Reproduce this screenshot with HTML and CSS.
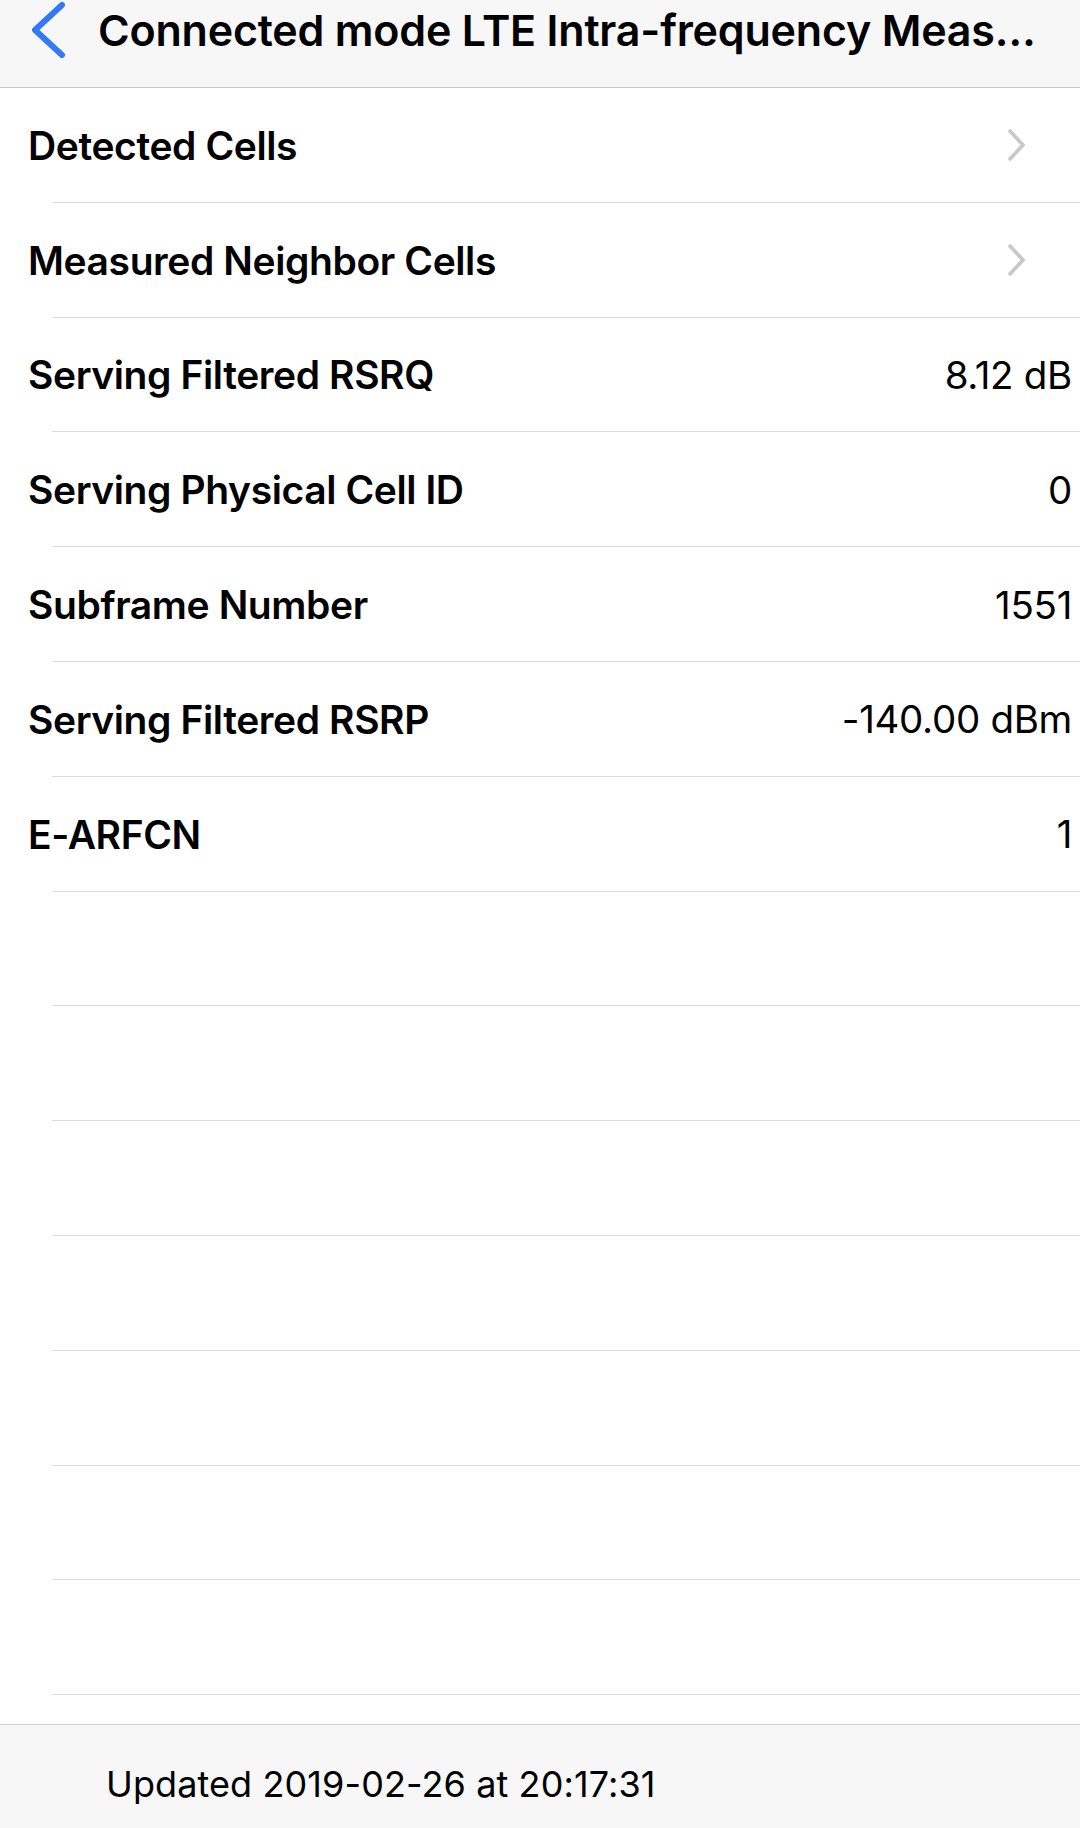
FILE: index.html
```html
<!DOCTYPE html>
<html>
<head>
<meta charset="utf-8">
<link rel="stylesheet" href="styles.css">
</head>
<body>
<div class="screen">
  <header class="navbar">
    <div class="nav-row">
      <svg class="back" width="40" height="60" viewBox="0 0 40 60"><polyline points="30,5 3,30 30,55" fill="none" stroke="#3478f6" stroke-width="6" stroke-linecap="round" stroke-linejoin="round"/></svg>
      <div class="title">Connected mode LTE Intra-frequency Meas…</div>
    </div>
  </header>
  <main class="list">
    <div class="row nav"><span class="label">Detected Cells</span><svg class="chev" width="22" height="36" viewBox="0 0 22 36"><polyline points="3,3 17,18 3,33" fill="none" stroke="#c7c7cc" stroke-width="3.6"/></svg></div>
    <div class="row nav"><span class="label">Measured Neighbor Cells</span><svg class="chev" width="22" height="36" viewBox="0 0 22 36"><polyline points="3,3 17,18 3,33" fill="none" stroke="#c7c7cc" stroke-width="3.6"/></svg></div>
    <div class="row"><span class="label">Serving Filtered RSRQ</span><span class="value">8.12 dB</span></div>
    <div class="row"><span class="label">Serving Physical Cell ID</span><span class="value">0</span></div>
    <div class="row"><span class="label">Subframe Number</span><span class="value">1551</span></div>
    <div class="row"><span class="label">Serving Filtered RSRP</span><span class="value">-140.00 dBm</span></div>
    <div class="row"><span class="label">E-ARFCN</span><span class="value">1</span></div>
    <div class="row"></div>
    <div class="row"></div>
    <div class="row"></div>
    <div class="row"></div>
    <div class="row"></div>
    <div class="row"></div>
    <div class="row"></div>
  </main>
  <footer class="footer">
    <span class="updated">Updated 2019-02-26 at 20:17:31</span>
  </footer>
</div>
</body>
</html>
```

FILE: styles.css
```css
html, body {
  margin: 0;
  padding: 0;
  background: #ffffff;
}

.screen {
  width: 1080px;
  height: 1828px;
  display: flex;
  flex-direction: column;
  overflow: hidden;
  font-family: Inter, "Noto Sans", sans-serif;
  color: #000;
}

.navbar {
  height: 87px;
  flex: none;
  background: #f7f7f8;
  border-bottom: 1px solid #c9c9cc;
}

.nav-row {
  height: 60px;
  display: flex;
  align-items: center;
}

.back {
  margin-left: 32px;
  flex: none;
}

.title {
  margin-left: 26px;
  font-size: 43px;
  font-weight: 600;
  letter-spacing: -0.2px;
  white-space: nowrap;
}

.list {
  flex: 1;
  display: flex;
  flex-direction: column;
}

.row {
  height: 114.8px;
  flex: none;
  box-sizing: border-box;
  display: flex;
  align-items: center;
  justify-content: space-between;
  padding: 0 8px 0 28px;
  background: linear-gradient(#dcdce0, #dcdce0) no-repeat 52px 100% / calc(100% - 52px) 1px;
}

.row.nav {
  padding-right: 52px;
}

.label {
  font-size: 39px;
  font-weight: 600;
  letter-spacing: -0.4px;
}

.value {
  font-size: 38.5px;
  font-weight: 400;
  letter-spacing: -0.3px;
}

.chev {
  flex: none;
}

.footer {
  height: 104px;
  flex: none;
  box-sizing: border-box;
  background: #f7f7f8;
  border-top: 1px solid #cfcfd2;
  display: flex;
  align-items: center;
  padding: 14px 0 0 106px;
}

.updated {
  font-size: 36px;
  font-weight: 400;
  letter-spacing: 0.1px;
}
```
